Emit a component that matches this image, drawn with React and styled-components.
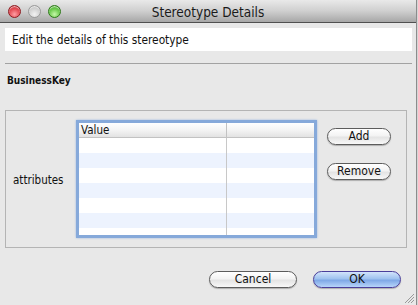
import styled, { createGlobalStyle } from "styled-components";

const uiFont = `"DejaVu Sans Condensed", "DejaVu Sans", "Liberation Sans", sans-serif`;

const GlobalStyle = createGlobalStyle`
  html, body {
    margin: 0;
    padding: 0;
    background: #d6d6d6;
  }
  body {
    font-family: ${uiFont};
  }
`;

const Window = styled.div`
  width: 416px;
  height: 305px;
  background: #e8e8e8;
  border-right: 1px solid #8c8c8c;
  display: flex;
  flex-direction: column;
  position: relative;
  overflow: hidden;
`;

const TitleBar = styled.div`
  height: 22px;
  flex-shrink: 0;
  border-bottom: 1px solid #505050;
  background: linear-gradient(#e9e9e9, #cfcfcf 50%, #a7a7a7);
  display: flex;
  align-items: center;
  position: relative;
`;

const Lights = styled.div`
  position: absolute;
  left: 8px;
  top: 5px;
  display: flex;
  gap: 7px;
`;

const Light = styled.span`
  width: 13px;
  height: 13px;
  border-radius: 50%;
  box-sizing: border-box;
  border: 1px solid ${(p) => p.$edge};
  background: radial-gradient(circle at 50% 75%, ${(p) => p.$glow} 0%, ${(p) => p.$base} 60%, ${(p) => p.$dark} 100%);
  box-shadow: inset 0 1px 1px rgba(255, 255, 255, 0.7);
`;

const Title = styled.div`
  flex: 1;
  text-align: center;
  font-size: 13.5px;
  color: #1a1a1a;
  padding-top: 1px;
`;

const Body = styled.div`
  flex: 1;
  display: flex;
  flex-direction: column;
  padding: 5px 0 0 5px;
`;

const Banner = styled.div`
  width: 407px;
  height: 23px;
  background: #fff;
  display: flex;
  align-items: center;
  padding-left: 7px;
  box-sizing: border-box;
  font-size: 11.8px;
  color: #111;
`;

const Separator = styled.div`
  width: 407px;
  height: 1px;
  background: #a2a2a2;
  margin-top: 12px;
`;

const Heading = styled.div`
  margin: 11px 0 0 2px;
  height: 14px;
  font-size: 10px;
  font-weight: bold;
  color: #111;
`;

const GroupBox = styled.div`
  margin-top: 21px;
  width: 402px;
  height: 138px;
  box-sizing: border-box;
  border: 1px solid #b4b4b4;
  display: grid;
  grid-template-columns: 53px 241px 64px;
  column-gap: 10px;
  padding: 9px 0 0 7px;
`;

const FieldLabel = styled.div`
  align-self: center;
  margin-top: -8px;
  font-size: 11.5px;
  color: #111;
  white-space: nowrap;
`;

const Table = styled.div`
  height: 118px;
  box-sizing: border-box;
  border: 3px solid #86a9da;
  box-shadow: 0 0 2px #9db9e2, inset 0 0 0 1px #7599cf;
  background: #fff;
  overflow: hidden;
  display: flex;
  flex-direction: column;
`;

const HeaderRow = styled.div`
  display: grid;
  grid-template-columns: 148px 1fr;
  height: 15px;
  flex-shrink: 0;
  box-sizing: border-box;
  border-bottom: 1px solid #c2c2c2;
  background: linear-gradient(#ffffff, #f4f4f4 50%, #e2e2e2);
  font-size: 11.5px;
  color: #111;
  line-height: 14px;
`;

const HeaderCell = styled.div`
  padding-left: 2px;
  border-right: ${(p) => (p.$last ? "none" : "1px solid #c2c2c2")};
`;

const Row = styled.div`
  display: grid;
  grid-template-columns: 148px 1fr;
  height: 15px;
  flex-shrink: 0;
  background: ${(p) => (p.$odd ? "#edf3fe" : "#ffffff")};
`;

const Cell = styled.div`
  border-right: ${(p) => (p.$last ? "none" : "1px solid #c8c8c8")};
`;

const ButtonColumn = styled.div`
  display: flex;
  flex-direction: column;
  gap: 18px;
  padding-top: 8px;
`;

const Pill = styled.button`
  width: ${(p) => p.$w}px;
  height: 17px;
  padding: 0;
  border-radius: 9px;
  border: 1px solid ${(p) => (p.$primary ? "#4a3f9a" : "#5c5c5c")};
  background: ${(p) =>
    p.$primary
      ? "linear-gradient(#d2e4fb, #9fc2ef 45%, #7ea8e6 55%, #b7d5fa)"
      : "linear-gradient(#ffffff, #f3f3f3 45%, #e4e4e4 55%, #f8f8f8)"};
  box-shadow: 0 1px 1px rgba(0, 0, 0, 0.25);
  font-family: ${uiFont};
  font-size: 12px;
  color: #111;
  line-height: 15px;
`;

const Footer = styled.div`
  display: flex;
  justify-content: flex-end;
  gap: 16px;
  margin-top: 23px;
  padding-right: 15px;
`;

const Grip = styled.svg`
  position: absolute;
  right: 1px;
  bottom: 1px;
`;

const rows = [0, 1, 2, 3, 4, 5, 6];

export default function App() {
  return (
    <>
      <GlobalStyle />
      <Window>
        <TitleBar>
          <Lights>
            <Light $edge="#8e1a1f" $base="#e0434b" $glow="#ff9ea3" $dark="#a8131b" />
            <Light $edge="#9a9a9a" $base="#cfcfcf" $glow="#f2f2f2" $dark="#b0b0b0" />
            <Light $edge="#2d7a18" $base="#62c543" $glow="#c5f7a8" $dark="#3b9a22" />
          </Lights>
          <Title>Stereotype Details</Title>
        </TitleBar>
        <Body>
          <Banner>Edit the details of this stereotype</Banner>
          <Separator />
          <Heading>BusinessKey</Heading>
          <GroupBox>
            <FieldLabel>attributes</FieldLabel>
            <Table>
              <HeaderRow>
                <HeaderCell>Value</HeaderCell>
                <HeaderCell $last />
              </HeaderRow>
              {rows.map((r) => (
                <Row key={r} $odd={r % 2 === 1}>
                  <Cell />
                  <Cell $last />
                </Row>
              ))}
            </Table>
            <ButtonColumn>
              <Pill $w={64}>Add</Pill>
              <Pill $w={64}>Remove</Pill>
            </ButtonColumn>
          </GroupBox>
          <Footer>
            <Pill $w={88}>Cancel</Pill>
            <Pill $w={88} $primary>OK</Pill>
          </Footer>
        </Body>
        <Grip width="11" height="11" viewBox="0 0 11 11">
          <path d="M10 1 L1 10 M10 4 L4 10 M10 7 L7 10" stroke="#9a9a9a" strokeWidth="1" />
        </Grip>
      </Window>
    </>
  );
}
